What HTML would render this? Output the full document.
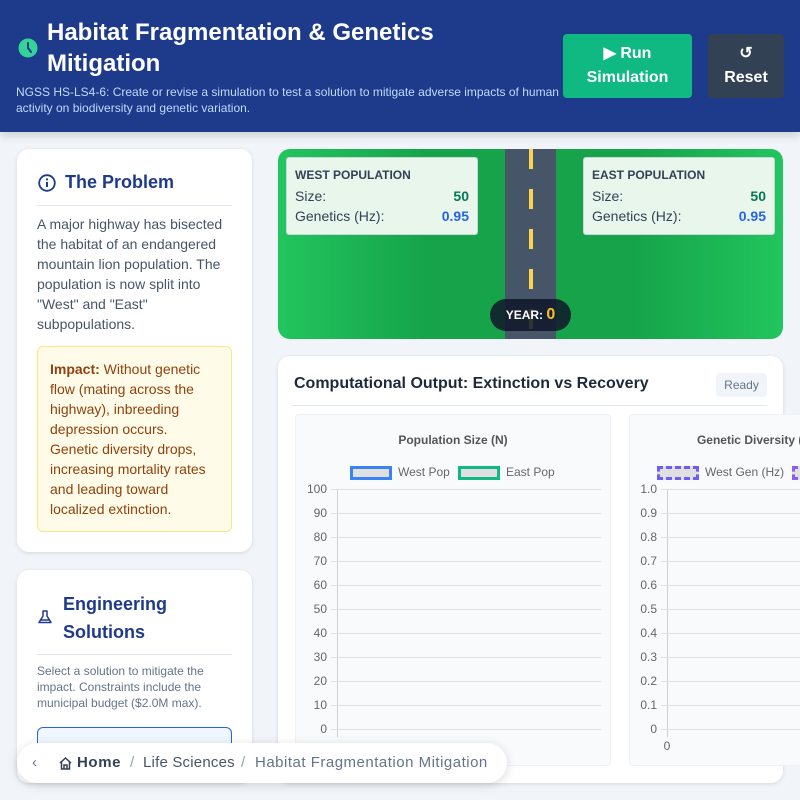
<!DOCTYPE html>
<html><head><meta charset="utf-8"><style>
*{box-sizing:border-box;margin:0;padding:0}
body{width:800px;height:800px;overflow:hidden;background:#f1f5f9;font-family:"Liberation Sans",sans-serif;position:relative}
.hdr{position:absolute;left:0;top:0;width:800px;height:132px;background:#1e3a8a;box-shadow:0 4px 8px rgba(0,0,0,.15)}
.abs{position:absolute}
.card{position:absolute;background:#fff;border-radius:12px;box-shadow:0 1px 4px rgba(0,0,0,.12)}
.yl{position:absolute;font-size:12px;color:#666;text-align:right;width:30px}
.gl{position:absolute;height:1px;background:#e2e2e2}
</style></head><body>
<div class="hdr">
 <svg class="abs" style="left:18px;top:38px" width="20" height="20" viewBox="0 0 20 20"><circle cx="10" cy="10" r="9.5" fill="#34d399"/><path d="M10 5v5l3 4" stroke="#1e3a8a" stroke-width="2" fill="none" stroke-linecap="round"/></svg>
 <div class="abs" style="left:47px;top:17px;font-size:24px;font-weight:bold;color:#fff;line-height:31px;width:480px">Habitat Fragmentation &amp; Genetics Mitigation</div>
 <div class="abs" style="left:16px;top:85px;font-size:12px;color:#bfdbfe;line-height:15.5px;width:560px">NGSS HS-LS4-6: Create or revise a simulation to test a solution to mitigate adverse impacts of human activity on biodiversity and genetic variation.</div>
 <div class="abs" style="left:563px;top:34px;width:129px;height:64px;background:#10b981;border-radius:4px;color:#fff;font-weight:bold;font-size:16px;text-align:center;line-height:24px;padding-top:8px">▶ Run<br>Simulation</div>
 <div class="abs" style="left:708px;top:34px;width:76px;height:64px;background:#334155;border-radius:4px;color:#fff;font-weight:bold;font-size:16px;text-align:center;line-height:24px;padding-top:8px">↺<br>Reset</div>
</div>

<div class="card" style="left:17px;top:149px;width:235px;height:403px">
 <svg class="abs" style="left:21px;top:25px" width="18" height="18" viewBox="0 0 18 18"><circle cx="9" cy="9" r="7.8" stroke="#1e3a8a" stroke-width="1.8" fill="none"/><path d="M9 8v5" stroke="#1e3a8a" stroke-width="2"/><circle cx="9" cy="5.4" r="1.1" fill="#1e3a8a"/></svg>
 <div class="abs" style="left:48px;top:23px;font-size:18px;font-weight:bold;color:#1e3a8a">The Problem</div>
 <div class="abs" style="left:20px;top:56px;width:195px;height:1px;background:#e2e8f0"></div>
 <div class="abs" style="left:20px;top:65px;width:198px;font-size:14px;line-height:20px;color:#475569">A major highway has bisected the habitat of an endangered mountain lion population. The population is now split into "West" and "East" subpopulations.</div>
 <div class="abs" style="left:20px;top:197px;width:195px;height:186px;background:#fefce8;border:1px solid #fde68a;border-radius:6px;padding:12px 12px;font-size:14px;line-height:20px;color:#92400e"><b>Impact:</b> Without genetic flow (mating across the highway), inbreeding depression occurs. Genetic diversity drops, increasing mortality rates and leading toward localized extinction.</div>
</div>

<div class="card" style="left:17px;top:570px;width:235px;height:213px;overflow:hidden">
 <svg class="abs" style="left:20px;top:39px" width="16" height="16" viewBox="0 0 16 16"><path d="M5.5 2h5M6 2v5l-4 6.5h12L10 7V2M3.5 11h9" stroke="#1e3a8a" stroke-width="1.5" fill="none" stroke-linejoin="round"/></svg>
 <div class="abs" style="left:46px;top:20px;font-size:18px;font-weight:bold;color:#1e3a8a;line-height:28px">Engineering<br>Solutions</div>
 <div class="abs" style="left:20px;top:84px;width:195px;height:1px;background:#e2e8f0"></div>
 <div class="abs" style="left:20px;top:93px;width:198px;font-size:12px;line-height:16px;color:#64748b">Select a solution to mitigate the impact. Constraints include the municipal budget ($2.0M max).</div>
 <div class="abs" style="left:20px;top:157px;width:195px;height:60px;background:#eff6ff;border:1px solid #2563eb;border-radius:6px"></div>
</div>

<div class="abs" style="left:278px;top:149px;width:505px;height:190px;border-radius:12px;overflow:hidden;background:linear-gradient(90deg,#22c55e 0%,#16a34a 30%,#16a34a 70%,#22c55e 100%)">
 <div class="abs" style="left:227px;top:0;width:51px;height:190px;background:#475569"></div>
 <div class="abs" style="left:251px;top:0;width:4px;height:190px;background:repeating-linear-gradient(180deg,#fcd34d 0 20px,transparent 20px 40px)"></div>
 <div class="abs" style="left:8px;top:8px;width:192px;height:78px;background:#e8f6ec;border:1px solid #cbd5e1;border-radius:3px;padding:9px 8px;color:#334155;font-size:14px;line-height:20px">
  <div style="font-size:12px;font-weight:bold;line-height:16px;margin-bottom:3px">WEST POPULATION</div>
  <div style="display:flex;justify-content:space-between">Size:<b style="color:#047857">50</b></div>
  <div style="display:flex;justify-content:space-between">Genetics (Hz):<b style="color:#2563eb">0.95</b></div>
 </div>
 <div class="abs" style="left:305px;top:8px;width:192px;height:78px;background:#e8f6ec;border:1px solid #cbd5e1;border-radius:3px;padding:9px 8px;color:#334155;font-size:14px;line-height:20px">
  <div style="font-size:12px;font-weight:bold;line-height:16px;margin-bottom:3px">EAST POPULATION</div>
  <div style="display:flex;justify-content:space-between">Size:<b style="color:#047857">50</b></div>
  <div style="display:flex;justify-content:space-between">Genetics (Hz):<b style="color:#2563eb">0.95</b></div>
 </div>
 <div class="abs" style="left:212px;top:150px;width:81px;height:32px;border-radius:16px;background:rgba(15,23,42,.85);color:#fff;font-weight:bold;font-size:12px;text-align:center;line-height:32px">YEAR: <span style="color:#fbbf24;font-size:16px">0</span></div>
</div>

<div class="card" style="left:278px;top:356px;width:505px;height:427px">
 <div class="abs" style="left:16px;top:19px;font-size:16px;font-weight:bold;color:#1e293b">Computational Output: Extinction vs Recovery</div>
 <div class="abs" style="left:438px;top:17px;width:51px;height:24px;background:#f1f5f9;border-radius:4px;font-size:12px;color:#64748b;text-align:center;line-height:24px">Ready</div>
 <div class="abs" style="left:14px;top:49px;width:475px;height:1px;background:#e2e8f0"></div>
 <div class="abs" style="left:17px;top:58px;width:316px;height:352px;background:#f8fafc;border:1px solid #eef2f6;border-radius:4px"></div>
 <div class="abs" style="left:351px;top:58px;width:200px;height:352px;background:#f8fafc;border:1px solid #eef2f6;border-radius:4px"></div>
</div>

<div class="abs" style="left:295px;top:433px;width:316px;text-align:center;font-size:12px;font-weight:bold;color:#555">Population Size (N)</div>
<div class="abs" style="left:350px;top:466px;width:42px;height:14px;border:3px solid #3b82f6;background:#e0e0e0"></div>
<div class="abs" style="left:398px;top:465px;font-size:12px;color:#666">West Pop</div>
<div class="abs" style="left:458px;top:466px;width:42px;height:14px;border:3px solid #10b981;background:#e0e0e0"></div>
<div class="abs" style="left:506px;top:465px;font-size:12px;color:#666">East Pop</div>
<div class="abs" style="left:629px;top:433px;width:260px;text-align:center;font-size:12px;font-weight:bold;color:#555">Genetic Diversity (Hz)</div>
<div class="abs" style="left:657px;top:466px;width:42px;height:14px;border:3px dashed #6d5cf6;background:#e0e0e0"></div>
<div class="abs" style="left:705px;top:465px;font-size:12px;color:#666">West Gen (Hz)</div>
<div class="abs" style="left:792px;top:466px;width:42px;height:14px;border:3px dashed #8b5cf6;background:#e0e0e0"></div>

<div class="abs" style="left:337px;top:489px;width:1px;height:248px;background:#d0d0d0"></div>
<div class="abs" style="left:667px;top:489px;width:1px;height:248px;background:#d0d0d0"></div>
<div id="g"></div>
<script>
var h='';var a=['100','90','80','70','60','50','40','30','20','10','0'];var b=['1.0','0.9','0.8','0.7','0.6','0.5','0.4','0.3','0.2','0.1','0'];
for(var i=0;i<11;i++){var y=489+i*24;
h+='<div class="gl" style="left:331px;top:'+y+'px;width:270px"></div><div class="yl" style="left:297px;top:'+(y-7)+'px">'+a[i]+'</div>';
h+='<div class="gl" style="left:661px;top:'+y+'px;width:139px"></div><div class="yl" style="left:627px;top:'+(y-7)+'px">'+b[i]+'</div>';}
document.getElementById('g').innerHTML=h;
</script>
<div class="yl" style="left:652px;top:739px;text-align:center">0</div>

<div class="abs" style="left:17px;top:743px;width:490px;height:40px;background:#fff;border-radius:20px;box-shadow:0 2px 10px rgba(0,0,0,.15);font-size:15px;line-height:40px;color:#475569;white-space:nowrap">
 <span class="abs" style="left:15px;color:#64748b">‹</span>
 <svg class="abs" style="left:41px;top:13px" width="15" height="15" viewBox="0 0 15 15"><path d="M2 7L7.5 2 13 7M3.5 6v7h8V6M6 13V9h3v4" stroke="#334155" stroke-width="1.5" fill="none"/></svg>
 <span class="abs" style="left:60px;font-weight:bold;color:#334155;letter-spacing:0.6px">Home</span>
 <span class="abs" style="left:113px;color:#94a3b8">/</span>
 <span class="abs" style="left:126px;letter-spacing:0.2px">Life Sciences</span>
 <span class="abs" style="left:224px;color:#94a3b8">/</span>
 <span class="abs" style="left:238px;color:#64748b;letter-spacing:0.5px">Habitat Fragmentation Mitigation</span>
</div>
</body></html>
